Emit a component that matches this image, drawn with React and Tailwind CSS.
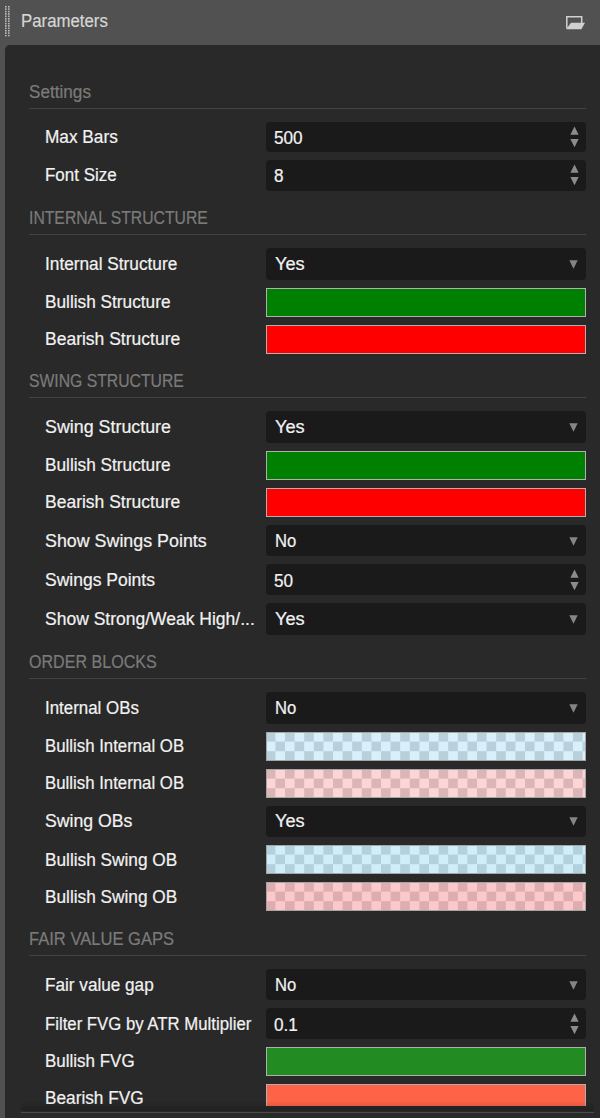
import React from 'react';
import clsx from 'clsx';

// Parameter groups, in display order. `fit` sets the horizontal scale of a text.
const groups = [
  {
    title: 'Settings',
    fit: 'scale-x-[0.98]',
    rows: [
      { label: 'Max Bars', fit: 'scale-x-[0.985]', type: 'number', value: '500' },
      { label: 'Font Size', fit: 'scale-x-[0.97]', type: 'number', value: '8' },
    ],
  },
  {
    title: 'INTERNAL STRUCTURE',
    fit: 'scale-x-[0.9]',
    rows: [
      { label: 'Internal Structure', fit: 'scale-x-[0.985]', type: 'select', value: 'Yes' },
      { label: 'Bullish Structure', fit: 'scale-x-[0.985]', type: 'color', value: 'bg-[#008000]' },
      { label: 'Bearish Structure', fit: 'scale-x-[1]', type: 'color', value: 'bg-[#ff0000]' },
    ],
  },
  {
    title: 'SWING STRUCTURE',
    fit: 'scale-x-[0.9]',
    rows: [
      { label: 'Swing Structure', fit: 'scale-x-[1.02]', type: 'select', value: 'Yes' },
      { label: 'Bullish Structure', fit: 'scale-x-[0.985]', type: 'color', value: 'bg-[#008000]' },
      { label: 'Bearish Structure', fit: 'scale-x-[1]', type: 'color', value: 'bg-[#ff0000]' },
      { label: 'Show Swings Points', fit: 'scale-x-[1.02]', type: 'select', value: 'No' },
      { label: 'Swings Points', fit: 'scale-x-[1]', type: 'number', value: '50' },
      { label: 'Show Strong/Weak High/...', fit: 'scale-x-[1]', type: 'select', value: 'Yes' },
    ],
  },
  {
    title: 'ORDER BLOCKS',
    fit: 'scale-x-[0.918]',
    rows: [
      { label: 'Internal OBs', fit: 'scale-x-[0.965]', type: 'select', value: 'No' },
      { label: 'Bullish Internal OB', fit: 'scale-x-[0.96]', type: 'alpha', colors: ['#b9d0db', '#d8f0fb'] },
      { label: 'Bullish Internal OB', fit: 'scale-x-[0.96]', type: 'alpha', colors: ['#dbb6b7', '#fcd5d6'] },
      { label: 'Swing OBs', fit: 'scale-x-[1.01]', type: 'select', value: 'Yes' },
      { label: 'Bullish Swing OB', fit: 'scale-x-[0.985]', type: 'alpha', colors: ['#b3d0dd', '#d0edfa'] },
      { label: 'Bullish Swing OB', fit: 'scale-x-[0.985]', type: 'alpha', colors: ['#deadaf', '#fbc9cb'] },
    ],
  },
  {
    title: 'FAIR VALUE GAPS',
    fit: 'scale-x-[0.946]',
    rows: [
      { label: 'Fair value gap', fit: 'scale-x-[0.98]', type: 'select', value: 'No' },
      { label: 'Filter FVG by ATR Multiplier', fit: 'scale-x-[0.957]', type: 'number', value: '0.1' },
      { label: 'Bullish FVG', fit: 'scale-x-[0.97]', type: 'color', value: 'bg-[#228b22]' },
      { label: 'Bearish FVG', fit: 'scale-x-[0.985]', type: 'color', value: 'bg-[#ff6347]' },
    ],
  },
];

const heights = {
  number: 'h-[30.6px]',
  select: 'h-[31.8px]',
  color: 'h-[29px]',
  alpha: 'h-[29px]',
};

const Text = ({ fit, className, children }) => (
  <span
    className={clsx(
      'inline-block origin-left whitespace-nowrap text-[17.5px] leading-5 [-webkit-text-stroke:0.2px_currentColor]',
      fit,
      className
    )}
  >
    {children}
  </span>
);

const NumberField = ({ value }) => (
  <div className="flex h-full items-center justify-between rounded-[4px] bg-[#1a1a1a] pl-2 pr-[7px]">
    <Text fit="scale-x-[0.98]" className="mt-[2px] text-[#f2f2f2]">{value}</Text>
    <svg width="9" height="22" viewBox="0 0 9 22" className="fill-[#8c8c8c]">
      <path d="M4.5 0.5L8.6 8.7H0.4Z" />
      <path d="M0.4 13H8.6L4.5 21.2Z" />
    </svg>
  </div>
);

const SelectField = ({ value }) => (
  <div className="flex h-full items-center justify-between rounded-[4px] bg-[#1a1a1a] pl-[9px] pr-2">
    <Text fit={value === 'Yes' ? 'scale-x-[1.04]' : 'scale-x-[0.95]'} className="text-[#f2f2f2]">
      {value}
    </Text>
    <svg width="9" height="9" viewBox="0 0 9 9" className="mt-px fill-[#858585]">
      <path d="M0.3 0.3H8.7L4.5 8.8Z" />
    </svg>
  </div>
);

const ColorField = ({ value }) => (
  <div className={clsx('h-full border border-[#b0b0b0]', value)} />
);

// Translucent colour over a checkerboard
const AlphaField = ({ id, colors }) => (
  <div className="h-full border border-[#a5a5a5]">
    <svg width="100%" height="100%" className="block">
      <defs>
        <pattern id={id} x="-1.2" y="-1" width="19.2" height="19.2" patternUnits="userSpaceOnUse">
          <rect width="19.2" height="19.2" fill={colors[1]} />
          <rect width="9.6" height="9.6" fill={colors[0]} />
          <rect x="9.6" y="9.6" width="9.6" height="9.6" fill={colors[0]} />
        </pattern>
      </defs>
      <rect width="100%" height="100%" fill={`url(#${id})`} />
    </svg>
  </div>
);

const Field = ({ row, id }) => {
  if (row.type === 'number') return <NumberField value={row.value} />;
  if (row.type === 'select') return <SelectField value={row.value} />;
  if (row.type === 'alpha') return <AlphaField id={id} colors={row.colors} />;
  return <ColorField value={row.value} />;
};

const Group = ({ group, index }) => (
  <section>
    <div className="flex h-[57.5px] flex-col justify-end pb-[13px]">
      <h2 className="flex h-[27px] border-b-[1.5px] border-[#444444] text-[#7b7b7b]">
        <Text fit={group.fit}>{group.title}</Text>
      </h2>
    </div>
    <div className="flex flex-col gap-[7.9px] pl-4">
      {group.rows.map((row, i) => (
        <div key={i} className={clsx('flex items-center', heights[row.type])}>
          <div className="w-[220.6px] shrink-0 pt-[2px] text-[#f2f2f2]">
            <Text fit={row.fit}>{row.label}</Text>
          </div>
          <div className="h-full flex-1">
            <Field row={row} id={`checker-${index}-${i}`} />
          </div>
        </div>
      ))}
    </div>
  </section>
);

const App = () => (
  <div className="flex h-[1118px] w-[600px] flex-col overflow-hidden bg-[#515151] font-['Liberation_Sans',Arial,sans-serif]">
    <header className="flex h-[45px] shrink-0 items-center pl-[5px] pr-[15px]">
      <svg width="5" height="31" className="-mt-[2px]">
        <pattern id="grip" width="3" height="2.4" patternUnits="userSpaceOnUse">
          <rect width="1.6" height="1.4" fill="#c4c4c4" />
        </pattern>
        <rect width="5" height="31" fill="url(#grip)" />
      </svg>
      <div className="-mt-px ml-[11px] flex-1 text-[#d6d6d6]">
        <Text fit="scale-x-[0.96]">Parameters</Text>
      </div>
      <svg width="20" height="15" viewBox="0 0 20 15" className="-mt-px">
        <path d="M1.8 13.5V1.7H16.7V8" fill="none" stroke="#d0d0d0" strokeWidth="1.5" />
        <path d="M6 7.7H20L16.4 14.2H1.2Z" fill="#d0d0d0" />
      </svg>
    </header>

    <main className="ml-[5px] flex min-h-0 flex-1 flex-col rounded-tl-[5px] bg-[#292929]">
      <div className="h-[1061px] shrink-0 overflow-hidden pl-6 pr-[14.4px] pt-[19px]">
        {groups.map((group, index) => (
          <Group key={group.title} group={group} index={index} />
        ))}
      </div>
      <div className="relative ml-4 mr-[6px] h-[7px] border-b-[1.5px] border-[#4b4b4b]">
        <div className="absolute inset-x-0 -top-[5px] h-[10px] bg-gradient-to-b from-black/0 to-black/20" />
      </div>
    </main>
  </div>
);

export default App;
